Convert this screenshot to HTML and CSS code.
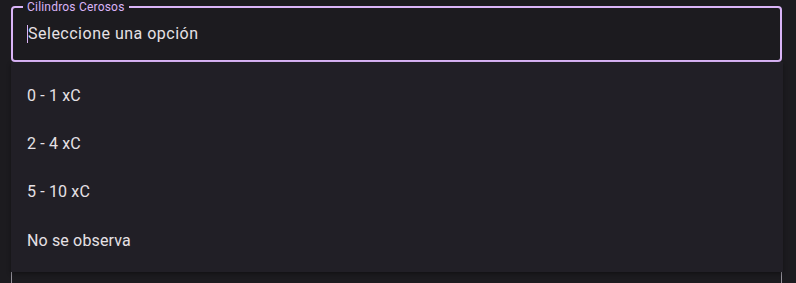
FILE: index.html
```html
<!DOCTYPE html>
<html lang="es">
<head>
<meta charset="utf-8">
<title>Cilindros Cerosos</title>
<link rel="stylesheet" href="styles.css">
</head>
<body>
<div class="page">
  <div class="select">
    <div class="field field--active">
      <span class="field__label">Cilindros Cerosos</span>
      <span class="field__value"><span class="caret"></span>Seleccione una opción</span>
    </div>
    <ul class="menu">
      <li class="menu__item">0 - 1 xC</li>
      <li class="menu__item">2 - 4 xC</li>
      <li class="menu__item">5 - 10 xC</li>
      <li class="menu__item">No se observa</li>
    </ul>
  </div>
  <div class="field field--idle"></div>
</div>
</body>
</html>
```

FILE: styles.css
```css
html, body {
  margin: 0;
  padding: 0;
  background: #1c1b1f;
  font-family: Roboto, "Noto Sans", sans-serif;
  color: #e6e1e5;
}

.page {
  box-sizing: border-box;
  min-height: 300px;
  padding: 6px 14px 0 11px;
  display: flex;
  flex-direction: column;
  gap: 170px;
}

.select {
  position: relative;
  z-index: 2;
}

.field {
  position: relative;
  box-sizing: border-box;
  height: 56px;
  border-radius: 4px;
  display: flex;
  align-items: center;
  padding-left: 14px;
}

.field--active {
  border: 2px solid #dab4f7;
}

.field--idle {
  border: 1px solid #938f99;
  width: 771px;
}

.field__label {
  position: absolute;
  top: -9px;
  left: 10px;
  padding: 0 4px;
  background: #1c1b1f;
  color: #dab4f7;
  font-size: 12px;
  line-height: 16px;
  letter-spacing: 0.2px;
}

.field__value {
  display: flex;
  align-items: center;
  font-size: 16px;
  line-height: 24px;
  letter-spacing: 0.5px;
  color: #e6e1e5;
}

.caret {
  display: inline-block;
  width: 1px;
  height: 18px;
  background: #dab4f7;
}

.menu {
  position: absolute;
  top: 56px;
  left: 0;
  right: -1px;
  margin: 0;
  padding: 9px 0 7px;
  list-style: none;
  background: #211f26;
  box-shadow: 0 2px 4px rgba(0, 0, 0, 0.35);
}

.menu__item {
  height: 48.4px;
  display: flex;
  align-items: center;
  padding-left: 16px;
  font-size: 16px;
  letter-spacing: 0.15px;
  color: #e6e1e5;
}
```
